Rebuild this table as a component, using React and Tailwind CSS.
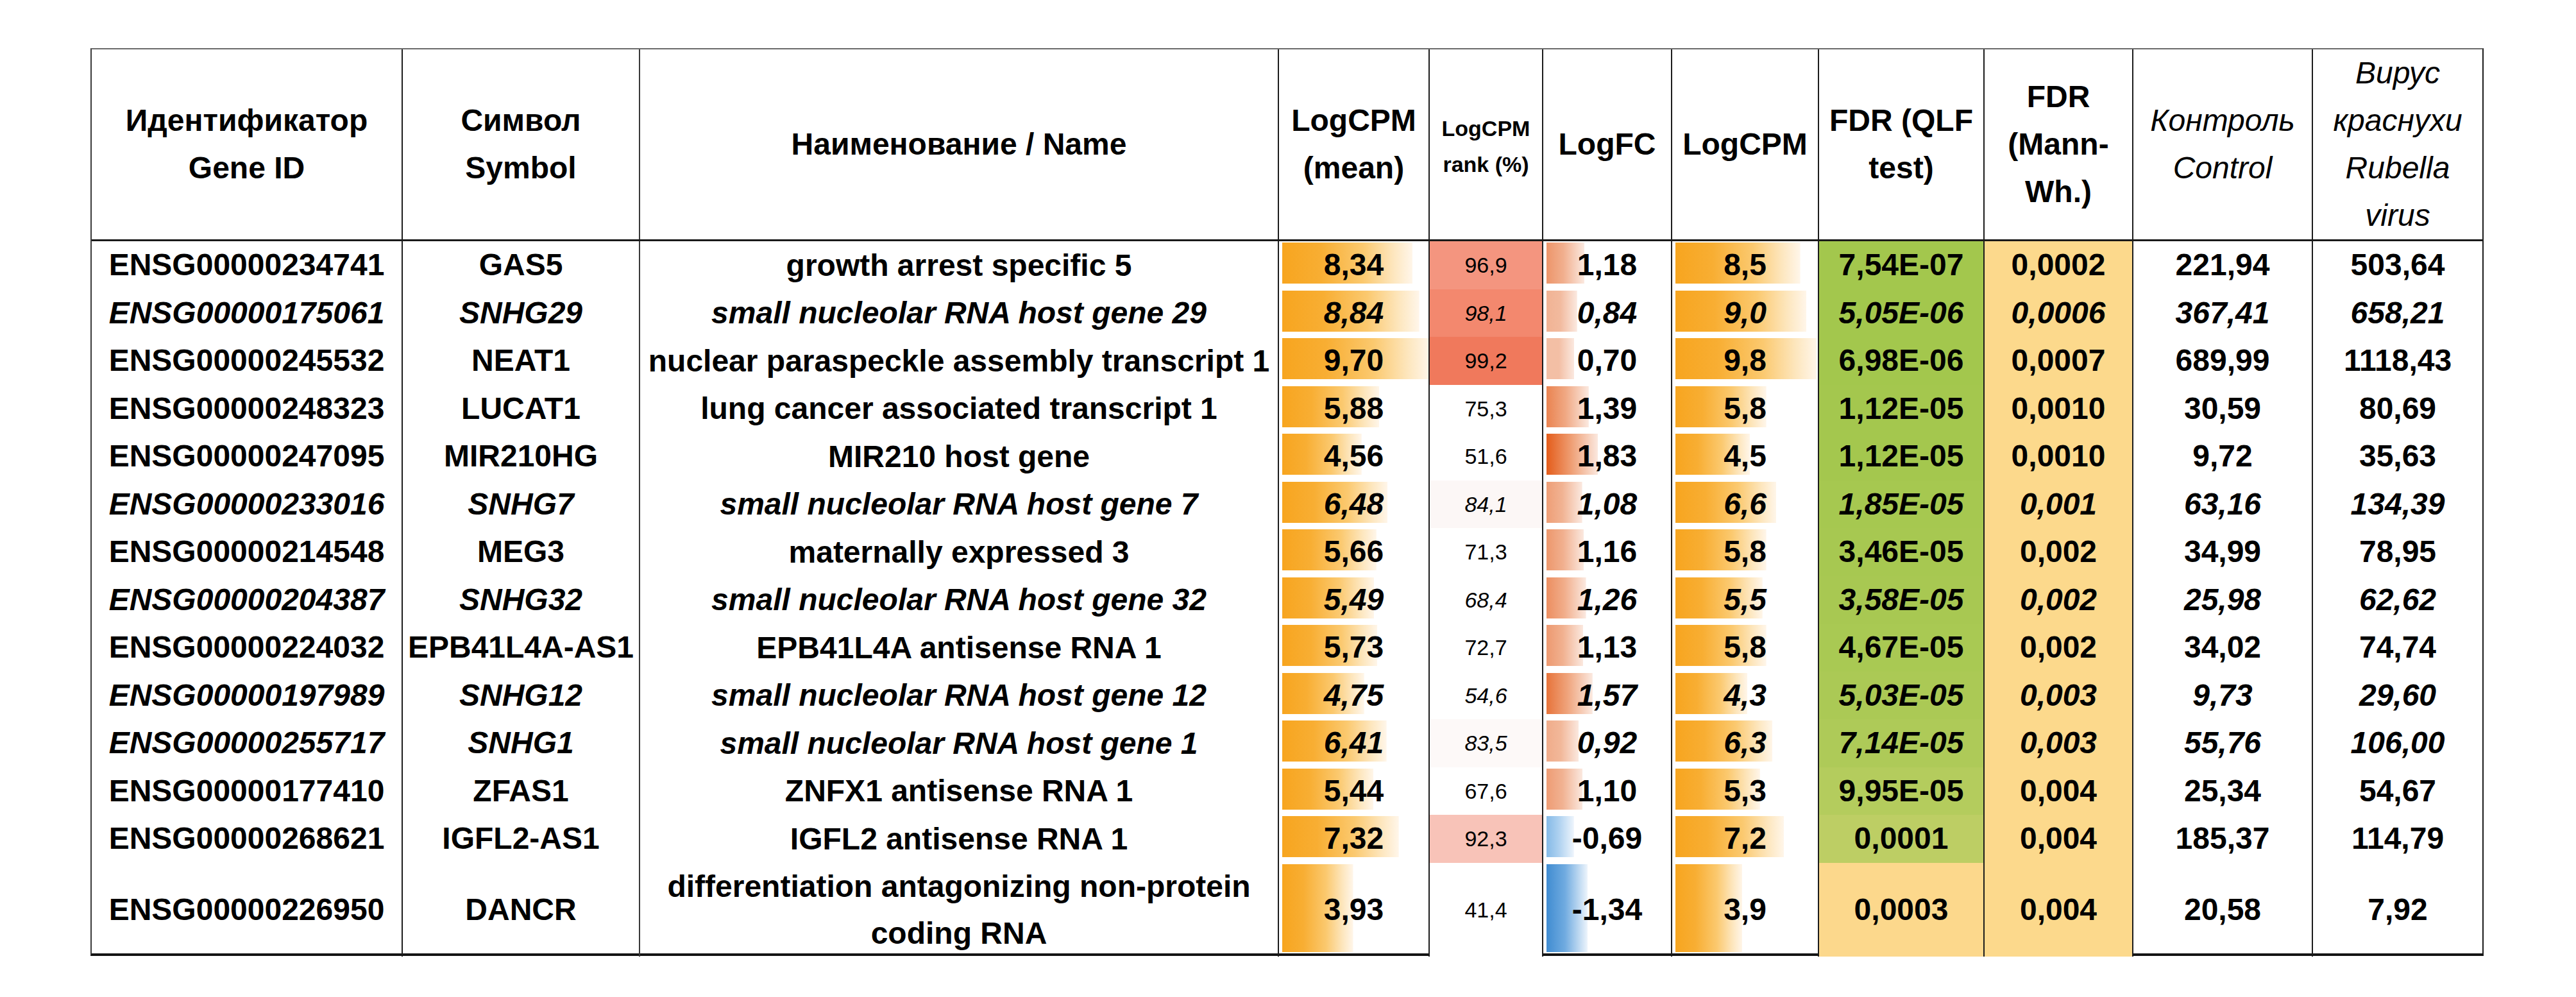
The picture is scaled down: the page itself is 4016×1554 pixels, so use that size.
import React from "react";

const rows = [
  ["ENSG00000234741", "GAS5", "growth arrest specific 5", 8.34, "8,34", 96.9, "96,9", 1.18, "1,18", 8.5, "8,5", "7,54E-07", "0,0002", "221,94", "503,64", false],
  ["ENSG00000175061", "SNHG29", "small nucleolar RNA host gene 29", 8.84, "8,84", 98.1, "98,1", 0.84, "0,84", 9.0, "9,0", "5,05E-06", "0,0006", "367,41", "658,21", true],
  ["ENSG00000245532", "NEAT1", "nuclear paraspeckle assembly transcript 1", 9.7, "9,70", 99.2, "99,2", 0.7, "0,70", 9.8, "9,8", "6,98E-06", "0,0007", "689,99", "1118,43", false],
  ["ENSG00000248323", "LUCAT1", "lung cancer associated transcript 1", 5.88, "5,88", 75.3, "75,3", 1.39, "1,39", 5.8, "5,8", "1,12E-05", "0,0010", "30,59", "80,69", false],
  ["ENSG00000247095", "MIR210HG", "MIR210 host gene", 4.56, "4,56", 51.6, "51,6", 1.83, "1,83", 4.5, "4,5", "1,12E-05", "0,0010", "9,72", "35,63", false],
  ["ENSG00000233016", "SNHG7", "small nucleolar RNA host gene 7", 6.48, "6,48", 84.1, "84,1", 1.08, "1,08", 6.6, "6,6", "1,85E-05", "0,001", "63,16", "134,39", true],
  ["ENSG00000214548", "MEG3", "maternally expressed 3", 5.66, "5,66", 71.3, "71,3", 1.16, "1,16", 5.8, "5,8", "3,46E-05", "0,002", "34,99", "78,95", false],
  ["ENSG00000204387", "SNHG32", "small nucleolar RNA host gene 32", 5.49, "5,49", 68.4, "68,4", 1.26, "1,26", 5.5, "5,5", "3,58E-05", "0,002", "25,98", "62,62", true],
  ["ENSG00000224032", "EPB41L4A-AS1", "EPB41L4A antisense RNA 1", 5.73, "5,73", 72.7, "72,7", 1.13, "1,13", 5.8, "5,8", "4,67E-05", "0,002", "34,02", "74,74", false],
  ["ENSG00000197989", "SNHG12", "small nucleolar RNA host gene 12", 4.75, "4,75", 54.6, "54,6", 1.57, "1,57", 4.3, "4,3", "5,03E-05", "0,003", "9,73", "29,60", true],
  ["ENSG00000255717", "SNHG1", "small nucleolar RNA host gene 1", 6.41, "6,41", 83.5, "83,5", 0.92, "0,92", 6.3, "6,3", "7,14E-05", "0,003", "55,76", "106,00", true],
  ["ENSG00000177410", "ZFAS1", "ZNFX1 antisense RNA 1", 5.44, "5,44", 67.6, "67,6", 1.1, "1,10", 5.3, "5,3", "9,95E-05", "0,004", "25,34", "54,67", false],
  ["ENSG00000268621", "IGFL2-AS1", "IGFL2 antisense RNA 1", 7.32, "7,32", 92.3, "92,3", -0.69, "-0,69", 7.2, "7,2", "0,0001", "0,004", "185,37", "114,79", false],
  ["ENSG00000226950", "DANCR", "differentiation antagonizing non-protein coding RNA", 3.93, "3,93", 41.4, "41,4", -1.34, "-1,34", 3.9, "3,9", "0,0003", "0,004", "20,58", "7,92", false],
];

const rankColors = {
  "96,9": "#f4957f",
  "98,1": "#f3886e",
  "99,2": "#f0795c",
  "92,3": "#f8c3b8",
  "84,1": "#fcf7f6",
  "83,5": "#fdf9f8",
};

const qlfColors = [
  "#a3c74d", "#a3c74d", "#a3c74d", "#a4c74e", "#a4c74e", "#a6c850", "#a7c851",
  "#a8c852", "#a9c953", "#abc955", "#aeca58", "#b4cc5d", "#bdce64", "#fcd88c",
];

function hexToRgb(h) {
  const n = parseInt(h.slice(1), 16);
  return [(n >> 16) & 255, (n >> 8) & 255, n & 255];
}
function mix(a, b, t) {
  const x = hexToRgb(a);
  const y = hexToRgb(b);
  const c = x.map((v, i) => Math.round(v + (y[i] - v) * t));
  return `rgb(${c[0]},${c[1]},${c[2]})`;
}

const orangeGrad =
  "linear-gradient(90deg, #f7a51f 0%, #f8ae33 30%, #fbc96f 62%, #fde6bd 85%, #fff6ea 100%)";

function barStyle(img, w, h) {
  return {
    backgroundImage: img,
    backgroundSize: `${w}px ${h}px`,
    backgroundPosition: "5px 2px",
    backgroundRepeat: "no-repeat",
  };
}

function fcGrad(v) {
  const a = Math.abs(v);
  const t = Math.max(0, Math.min(1, (a - 0.7) / 1.13));
  if (v >= 0) {
    const base = mix("#f3bfa5", "#e45c1a", t);
    return `linear-gradient(90deg, ${base} 0%, ${mix("#f3bfa5", "#ee9a6e", t)} 45%, #fbe9e0 100%)`;
  }
  const t2 = Math.max(0, Math.min(1, (a - 0.6) / 0.8));
  const base = mix("#8fc0ea", "#3a88cf", t2);
  return `linear-gradient(90deg, ${base} 0%, ${mix("#b7d6f2", "#6aa8de", t2)} 45%, #eef5fc 100%)`;
}

const gridCols =
  "grid grid-cols-[485px_370px_996px_235px_177px_201px_229px_258px_232px_280px_264px]";

const cellBase = "flex items-center justify-center text-center border-r-2 border-[#1c1c1c]";

function HeaderRow() {
  return (
    <div className={`${gridCols} h-[299px] border-b-[3px] border-[#1a1a1a] font-bold text-[48px] leading-[74px]`}>
      <div className={cellBase}>
        <div>Идентификатор<br />Gene ID</div>
      </div>
      <div className={`${cellBase} border-[#3a3a3a]`}>
        <div>Символ<br />Symbol</div>
      </div>
      <div className={cellBase}>
        <div>Наименование / Name</div>
      </div>
      <div className={cellBase}>
        <div>LogCPM<br />(mean)</div>
      </div>
      <div className={cellBase}>
        <div className="text-[34px] leading-[56px] pt-[6px]">LogCPM<br />rank (%)</div>
      </div>
      <div className={cellBase}>
        <div>LogFC</div>
      </div>
      <div className={cellBase}>
        <div>LogCPM</div>
      </div>
      <div className={cellBase}>
        <div>FDR (QLF<br />test)</div>
      </div>
      <div className={cellBase}>
        <div>FDR<br />(Mann-<br />Wh.)</div>
      </div>
      <div className={`${cellBase} font-normal italic`}>
        <div>Контроль<br />Control</div>
      </div>
      <div className="flex items-center justify-center text-center font-normal italic">
        <div>Вирус<br />краснухи<br />Rubella<br />virus</div>
      </div>
    </div>
  );
}

function DataRow({ r, i }) {
  const [id, sym, name, m, mS, rank, rankS, fc, fcS, cpm, cpmS, qlf, mw, ctl, vir, it] = r;
  const last = i === rows.length - 1;
  const barH = last ? 137 : 64;
  const rowH = last ? "h-[141.5px]" : "h-[74.5px]";
  const wM = Math.min(230, 28 + 21 * m);
  const wC = Math.min(222, 28 + 19.6 * cpm);
  const wF = 20 + 33 * Math.abs(fc);
  return (
    <div className={`${gridCols} ${rowH} font-bold text-[48px] leading-[74px] ${it ? "italic" : ""}`}>
      <div className={cellBase}>{id}</div>
      <div className={`${cellBase} border-[#3a3a3a]`}>{sym}</div>
      <div className={`${cellBase} leading-[73px]`}>{name}</div>
      <div className={cellBase} style={barStyle(orangeGrad, wM, barH)}>{mS}</div>
      <div
        className={`${cellBase} font-normal text-[34px]`}
        style={{ backgroundColor: rankColors[rankS] || "#ffffff" }}
      >
        {rankS}
      </div>
      <div className={cellBase} style={barStyle(fcGrad(fc), wF, barH)}>{fcS}</div>
      <div className={cellBase} style={barStyle(orangeGrad, wC, barH)}>{cpmS}</div>
      <div className={cellBase} style={{ backgroundColor: qlfColors[i] }}>{qlf}</div>
      <div className={`${cellBase} bg-[#fcd98c]`}>{mw}</div>
      <div className={cellBase}>{ctl}</div>
      <div className="flex items-center justify-center text-center">{vir}</div>
    </div>
  );
}

export default function App() {
  return (
    <div className="w-[4016px] h-[1554px] bg-white text-black font-['Liberation_Sans',Arial,sans-serif] overflow-hidden pt-[75px] pl-[141px]">
      <div className="w-[3731px] border-t-2 border-t-[#6a6a6a] border-l-2 border-r-2 border-l-[#3a3a3a] border-r-[#1c1c1c] border-b-4 border-b-[#141414]">
        <HeaderRow />
        {rows.map((r, i) => (
          <DataRow key={r[0]} r={r} i={i} />
        ))}
      </div>
    </div>
  );
}
